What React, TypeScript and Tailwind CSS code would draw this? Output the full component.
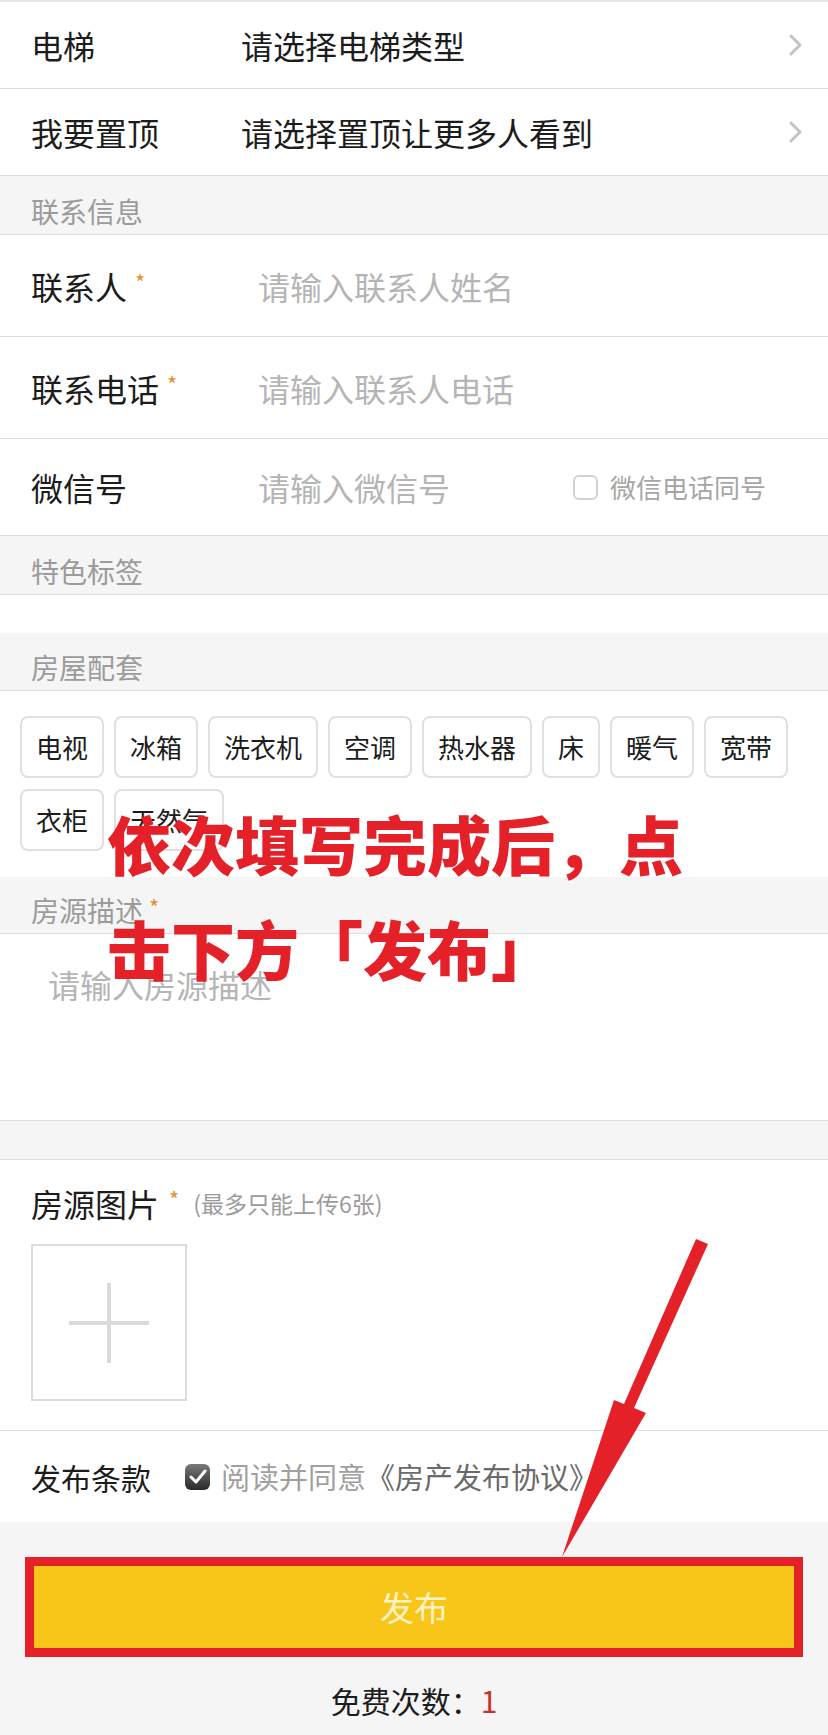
import type { ReactNode } from "react";

const tags = [
  "电视",
  "冰箱",
  "洗衣机",
  "空调",
  "热水器",
  "床",
  "暖气",
  "宽带",
  "衣柜",
  "天然气",
];

function Chevron() {
  return (
    <svg width="16" height="22" viewBox="0 0 16 22" className="mr-[24px] shrink-0">
      <polyline points="3,2 12,11 3,20" fill="none" stroke="#c4c4c4" strokeWidth="3" strokeLinecap="round" strokeLinejoin="round" />
    </svg>
  );
}

function Star() {
  return <span className="ml-[8px] self-start text-[22px] leading-[22px] text-[#e4902f]">*</span>;
}

function SelectRow({ label, value, className }: { label: string; value: string; className: string }) {
  return (
    <div className={`flex items-center border-b border-[#dedede] ${className}`}>
      <div className="w-[241px] shrink-0 pl-[31px] text-[32px] leading-none text-[#1c1c1c]">{label}</div>
      <div className="flex-1 text-[32px] leading-none text-[#1c1c1c]">{value}</div>
      <Chevron />
    </div>
  );
}

function SectionHeader({ children, className }: { children: ReactNode; className: string }) {
  return (
    <div className={`flex items-end border-b border-[#dedede] bg-[#f5f5f5] pl-[31px] pb-[9px] ${className}`}>
      <div className="flex text-[28px] leading-[28px] text-[#9b9b9b]">{children}</div>
    </div>
  );
}

function InputRow({ label, placeholder, required, className, children }: { label: string; placeholder: string; required?: boolean; className: string; children?: ReactNode }) {
  return (
    <div className={`flex items-center border-b border-[#dedede] ${className}`}>
      <div className="flex w-[258px] shrink-0 pl-[31px]">
        <span className="text-[32px] leading-[32px] text-[#1c1c1c]">{label}</span>
        {required && <Star />}
      </div>
      <div className="flex-1 text-[32px] leading-none text-[#b5b5b5]">{placeholder}</div>
      {children}
    </div>
  );
}

export default function App() {
  return (
    <div className="relative min-h-[1735px] w-[828px] overflow-hidden bg-white font-['Noto_Sans_CJK_SC',sans-serif]">
      <SelectRow label="电梯" value="请选择电梯类型" className="h-[89px] border-t-2 border-t-[#e6e6e6]" />
      <SelectRow label="我要置顶" value="请选择置顶让更多人看到" className="h-[87px]" />

      <SectionHeader className="h-[59px]">联系信息</SectionHeader>
      <InputRow label="联系人" placeholder="请输入联系人姓名" required className="h-[102px]" />
      <InputRow label="联系电话" placeholder="请输入联系人电话" required className="h-[102px]" />
      <InputRow label="微信号" placeholder="请输入微信号" className="h-[97px]">
        <div className="mr-[62px] flex items-center gap-[12px]">
          <span className="h-[25px] w-[25px] rounded-[6px] border-2 border-[#d2d2d2]" />
          <span className="text-[26px] leading-none text-[#a6a6a6]">微信电话同号</span>
        </div>
      </InputRow>

      <SectionHeader className="h-[59px]">特色标签</SectionHeader>
      <div className="h-[38px]" />
      <SectionHeader className="h-[58px]">房屋配套</SectionHeader>

      <div className="flex h-[186px] flex-wrap content-start gap-x-[10px] gap-y-[11px] pl-[20px] pt-[25px]">
        {tags.map((t) => (
          <div key={t} className="flex h-[62px] items-center rounded-[8px] border-2 border-[#e0e0e0] px-[14px] text-[26px] leading-none text-[#1c1c1c]">
            {t}
          </div>
        ))}
      </div>

      <SectionHeader className="h-[57px] pb-[8px]">
        房源描述
        <span className="ml-[6px] text-[22px] leading-[20px] text-[#e4902f]">*</span>
      </SectionHeader>
      <div className="h-[187px] border-b border-[#dedede] pl-[48px] pt-[34px] text-[32px] leading-[32px] text-[#b5b5b5]">请输入房源描述</div>
      <div className="h-[39px] border-b border-[#dedede] bg-[#f5f5f5]" />

      <div className="h-[271px] border-b border-[#dedede] pl-[31px] pt-[27px]">
        <div className="flex items-center">
          <span className="text-[32px] leading-[32px] text-[#1c1c1c]">房源图片</span>
          <span className="ml-[10px] self-start text-[22px] leading-[22px] text-[#e4902f]">*</span>
          <span className="ml-[14px] text-[23px] leading-none text-[#9b9b9b]">(最多只能上传6张)</span>
        </div>
        <div className="mt-[25px] flex h-[157px] w-[156px] items-center justify-center border-2 border-[#dcdcdc]">
          <svg width="80" height="80" viewBox="0 0 80 80">
            <rect x="0" y="38" width="80" height="4" fill="#dadada" />
            <rect x="38" y="0" width="4" height="80" fill="#dadada" />
          </svg>
        </div>
      </div>

      <div className="flex h-[91px] items-center pl-[31px]">
        <span className="w-[154px] text-[30px] leading-none text-[#1c1c1c]">发布条款</span>
        <span className="flex h-[26px] w-[25px] items-center justify-center rounded-[6px] bg-gradient-to-b from-[#7a7a7a] to-[#2a2a2a]">
          <svg width="18" height="16" viewBox="0 0 18 16">
            <polyline points="2,8 7,13 16,2" fill="none" stroke="#ffffff" strokeWidth="3" strokeLinecap="round" strokeLinejoin="round" />
          </svg>
        </span>
        <span className="ml-[11px] text-[29px] leading-none text-[#a0a0a0]">
          阅读并同意<span className="text-[#6a6a6a]">《房产发布协议》</span>
        </span>
      </div>

      <div className="h-[213px] bg-[#f5f5f5] pt-[35px]">
        <div className="mx-[25px] border-[9px] border-[#e42128]">
          <div className="flex h-[82px] items-center justify-center bg-[#f8c618] text-[34px] leading-none text-[#fdf2c6]">发布</div>
        </div>
        <div className="mt-[28px] text-center text-[30px] leading-none text-[#1c1c1c]">
          免费次数：<span className="text-[#c9302c]">1</span>
        </div>
      </div>

      {/* annotation overlay */}
      <div className="pointer-events-none absolute left-[107px] top-[790px] text-[64px] font-black leading-[105px] text-[#e42128]">
        <div>依次填写完成后，点</div>
        <div>击下方「发布」</div>
      </div>
      <svg className="pointer-events-none absolute left-0 top-0" width="828" height="1735" viewBox="0 0 828 1735">
        <polygon points="696,1239 708,1244 634,1408 646,1413 562,1557 614,1400 624,1404" fill="#e42128" />
      </svg>
    </div>
  );
}
